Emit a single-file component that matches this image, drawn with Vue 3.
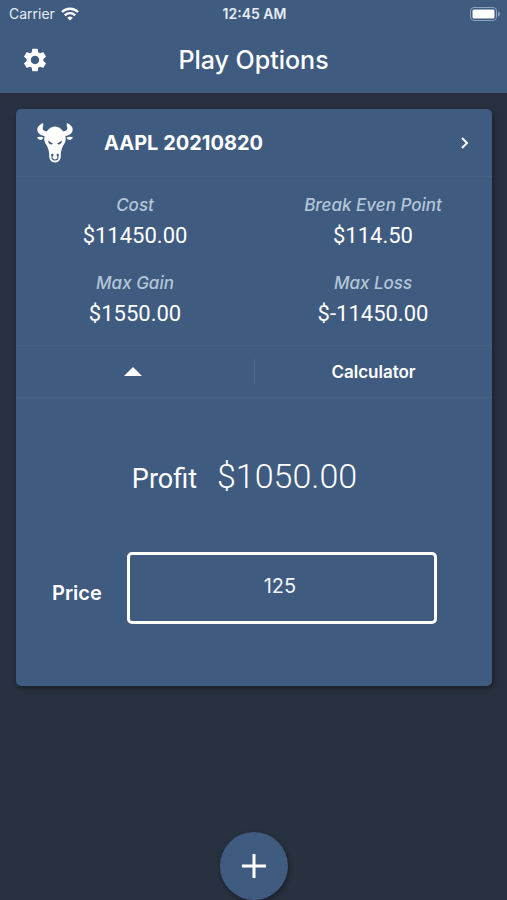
<template>
  <div class="screen">
    <header class="app-header">
      <div class="status-bar">
        <div class="carrier">
          <span>Carrier</span>
          <svg class="wifi" viewBox="0 0 18 14" aria-hidden="true">
            <path d="M1 5 A11.3 11.3 0 0 1 17 5" />
            <path d="M3.8 8.3 A7.4 7.4 0 0 1 14.2 8.3" />
            <path class="dot" d="M9 13.6 L6.2 10.8 A4 4 0 0 1 11.8 10.8 Z" />
          </svg>
        </div>
        <time>12:45 AM</time>
        <svg class="battery" viewBox="0 0 30 14" aria-hidden="true">
          <rect class="shell" x="0.5" y="0.5" width="26" height="13" rx="3.5" />
          <rect class="charge" x="2.5" y="2.5" width="22" height="9" rx="1.5" />
          <path class="tip" d="M28 4.6 Q30 5.4 30 7 Q30 8.6 28 9.4 Z" />
        </svg>
      </div>
      <div class="nav-bar">
        <button class="icon-button" type="button" aria-label="Settings">
          <svg viewBox="0 0 24 24" width="28" height="28">
            <path
              d="M19.14 12.94c.04-.3.06-.61.06-.94 0-.32-.02-.64-.07-.94l2.03-1.58c.18-.14.23-.41.12-.61l-1.92-3.32c-.12-.22-.37-.29-.59-.22l-2.39.96c-.5-.38-1.03-.7-1.62-.94l-.36-2.54c-.04-.24-.24-.41-.48-.41h-3.84c-.24 0-.43.17-.47.41l-.36 2.54c-.59.24-1.13.57-1.62.94l-2.39-.96c-.22-.08-.47 0-.59.22L2.74 8.87c-.12.21-.08.47.12.61l2.03 1.58c-.05.3-.09.63-.09.94s.02.64.07.94l-2.03 1.58c-.18.14-.23.41-.12.61l1.92 3.32c.12.22.37.29.59.22l2.39-.96c.5.38 1.03.7 1.62.94l.36 2.54c.05.24.24.41.48.41h3.84c.24 0 .44-.17.47-.41l.36-2.54c.59-.24 1.13-.56 1.62-.94l2.39.96c.22.08.47 0 .59-.22l1.92-3.32c.12-.22.07-.47-.12-.61l-2.01-1.58zM12 15.6c-1.98 0-3.6-1.62-3.6-3.6s1.62-3.6 3.6-3.6 3.6 1.62 3.6 3.6-1.62 3.6-3.6 3.6z"
            />
          </svg>
        </button>
        <h1>Play Options</h1>
      </div>
    </header>

    <main>
      <article class="card">
        <button class="card-header" type="button">
          <svg class="bull" viewBox="0 0 38 42" aria-hidden="true">
            <path d="M7 1 C3 2.5 .5 6 1.5 9 C2.5 12.5 6 14 10 14 L12.5 9.5 C9.5 9.7 7 9 6.7 6.5 C6.5 4.5 8 3.5 7 1 Z" />
            <path d="M31 1 C35 2.5 37.5 6 36.5 9 C35.5 12.5 32 14 28 14 L25.5 9.5 C28.5 9.7 31 9 31.3 6.5 C31.5 4.5 30 3.5 31 1 Z" />
            <path d="M1 15.5 C2.5 14.4 5.5 14.6 7.5 15.5 C6.5 18.5 3 19 1 15.5 Z" />
            <path d="M37 15.5 C35.5 14.4 32.5 14.6 30.5 15.5 C31.5 18.5 35 19 37 15.5 Z" />
            <path d="M19 4.5 C14.500 4.5 11 8 9 13 C7.5 17 8.6 20.5 10.200 22.5 C12 25.5 13 29 13.2 32 C12.8 37.5 15 40.5 19 40.5 C23 40.5 25.2 37.5 24.8 32 C25 29 26 25.5 27.8 22.5 C29.4 20.5 30.5 17 29 13 C27 8 23.500 4.5 19 4.5 Z" />
            <path class="cut" d="M12 18.5 L17 21.8 C15 23.2 12.5 22.2 12 18.5 Z" />
            <path class="cut" d="M26 18.5 L21 21.8 C23 23.2 25.5 22.2 26 18.5 Z" />
            <path class="ring" d="M16.500 33.5 C15 36 16.5 38 19 38 C21.5 38 23 36 21.500 33.5" />
            <circle class="cut" cx="16.3" cy="33" r="1.2" />
            <circle class="cut" cx="21.7" cy="33" r="1.2" />
          </svg>
          <span class="card-title">{{ symbol }} {{ expiry }}</span>
          <svg class="chevron" viewBox="0 0 10 14" aria-hidden="true">
            <path d="M2 2 L7 7 L2 12" />
          </svg>
        </button>

        <dl class="stats">
          <div v-for="stat in stats" :key="stat.label" class="stat">
            <dt>{{ stat.label }}</dt>
            <dd>{{ money(stat.value) }}</dd>
          </div>
        </dl>

        <div class="actions">
          <button type="button" :aria-label="open ? 'Collapse' : 'Expand'" @click="open = !open">
            <svg class="caret" :class="{ flipped: !open }" viewBox="0 0 18 9">
              <path d="M9 0 L18 9 H0 Z" />
            </svg>
          </button>
          <button type="button" @click="open = !open">Calculator</button>
        </div>

        <section v-if="open" class="calculator">
          <p class="profit">
            <span>Profit</span>
            <output for="price">{{ money(profit) }}</output>
          </p>
          <div class="price-row">
            <label for="price">Price</label>
            <input id="price" v-model="price" type="text" inputmode="decimal" />
          </div>
        </section>
      </article>
    </main>

    <button class="fab" type="button" aria-label="Add play">
      <svg viewBox="0 0 24 24" width="24" height="24">
        <path d="M12 0 V24 M0 12 H24" />
      </svg>
    </button>
  </div>
</template>

<script setup>
import { ref, computed } from 'vue'

const symbol = 'AAPL'
const expiry = '20210820'
const cost = 11450
const strike = 130
const shares = 100

const open = ref(true)
const price = ref('125')

const stats = [
  { label: 'Cost', value: cost },
  { label: 'Break Even Point', value: cost / shares },
  { label: 'Max Gain', value: strike * shares - cost },
  { label: 'Max Loss', value: -cost },
]

// Gains are capped at the strike of the sold call
const profit = computed(() => {
  const p = Number(price.value) || 0
  return Math.min(p, strike) * shares - cost
})

function money(value) {
  return `$${value.toFixed(2)}`
}
</script>

<style>
body {
  background: #28313f;
}
</style>

<style scoped>
.screen {
  min-height: 100vh;
  box-sizing: border-box;
  padding-bottom: 84px;
  background: #28313f;
  color: #fff;
  font-family: Inter, Roboto, sans-serif;
}

button {
  padding: 0;
  border: none;
  background: none;
  color: inherit;
  font: inherit;
  cursor: pointer;
}

svg {
  display: block;
  fill: currentColor;
}

.app-header {
  background: #3f5b80;
}

.status-bar {
  display: grid;
  grid-template-columns: 1fr auto 1fr;
  align-items: center;
  height: 27px;
  padding: 0 7px 0 9px;
  font-size: 14px;
  color: #e6edf6;
}

.status-bar time {
  font-weight: 600;
}

.carrier {
  display: flex;
  align-items: center;
  gap: 6px;
}

.wifi {
  width: 18px;
  height: 14px;
  fill: none;
  stroke: #fff;
  stroke-width: 2.4;
}

.wifi .dot {
  fill: #fff;
  stroke: none;
}

.battery {
  justify-self: end;
  width: 30px;
  height: 14px;
}

.battery .shell {
  fill: none;
  stroke: #8fa2bb;
}

.battery .charge {
  fill: #fff;
}

.battery .tip {
  fill: #8fa2bb;
}

.nav-bar {
  display: grid;
  grid-template-columns: 1fr auto 1fr;
  align-items: center;
  height: 66px;
  padding: 0 21px;
}

.icon-button {
  justify-self: start;
}

h1 {
  margin: 0;
  font-size: 25px;
  font-weight: 500;
  line-height: 30px;
}

main {
  padding: 16px 15px 0 16px;
}

.card {
  border-radius: 5px;
  background: #3f5b80;
  box-shadow: 1px 2px 5px rgba(0, 0, 0, 0.4);
}

.card-header {
  display: flex;
  align-items: center;
  width: 100%;
  height: 68px;
  padding: 0 22px 0 20px;
  border-bottom: 1px solid #436087;
  text-align: left;
}

.bull {
  width: 38px;
  height: 42px;
}

.bull .cut {
  fill: #3f5b80;
}

.bull .ring {
  fill: none;
  stroke: #3f5b80;
  stroke-width: 1.2;
}

.card-title {
  flex: 1;
  margin-left: 30px;
  font-size: 20px;
  font-weight: 700;
}

.chevron {
  width: 10px;
  height: 14px;
  fill: none;
  stroke: currentColor;
  stroke-width: 2;
}

.stats {
  display: grid;
  grid-template-columns: 1fr 1fr;
  row-gap: 20px;
  margin: 0;
  padding: 16px 0;
  text-align: center;
}

dt {
  font-size: 17px;
  font-style: italic;
  font-weight: 500;
  line-height: 24px;
  color: #b4c6d8;
}

dd {
  margin: 4px 0 0;
  font-family: Roboto, sans-serif;
  font-size: 22px;
  line-height: 30px;
}

.actions {
  display: grid;
  grid-template-columns: 1fr 1fr;
  padding: 13px 0;
  border-top: 1px solid #436087;
  border-bottom: 1px solid #436087;
}

.actions button {
  display: flex;
  align-items: center;
  justify-content: center;
  height: 25px;
  font-size: 17px;
  font-weight: 600;
}

.actions button:first-child {
  padding-right: 4px;
}

.actions button + button {
  border-left: 1px solid #4c6890;
}

.caret {
  width: 18px;
  height: 9px;
}

.caret.flipped {
  transform: rotate(180deg);
}

.calculator {
  padding: 56px 55px 62px 36px;
}

.profit {
  display: flex;
  align-items: baseline;
  justify-content: center;
  gap: 20px;
  margin: 0 0 51px;
  font-family: Roboto, sans-serif;
  font-size: 27px;
  line-height: 44px;
}

.profit output {
  font-size: 34px;
  font-weight: 300;
}

.price-row {
  display: flex;
  align-items: center;
  gap: 25px;
}

.price-row label {
  padding-top: 10px;
  font-size: 20px;
  font-weight: 600;
}

.price-row input {
  flex: 1;
  min-width: 0;
  box-sizing: border-box;
  height: 72px;
  padding: 0 8px 4px 4px;
  border: 3px solid #fff;
  border-radius: 5px;
  outline: none;
  background: transparent;
  color: #f0f4fa;
  font: 400 20px Inter, sans-serif;
  text-align: center;
}

.fab {
  position: fixed;
  bottom: 0;
  left: 50%;
  display: flex;
  align-items: center;
  justify-content: center;
  width: 68px;
  height: 68px;
  margin-left: -34px;
  border-radius: 50%;
  background: #3f5b80;
  box-shadow: 1px 2px 5px rgba(0, 0, 0, 0.4);
}

.fab path {
  fill: none;
  stroke: #fff;
  stroke-width: 3;
}
</style>
